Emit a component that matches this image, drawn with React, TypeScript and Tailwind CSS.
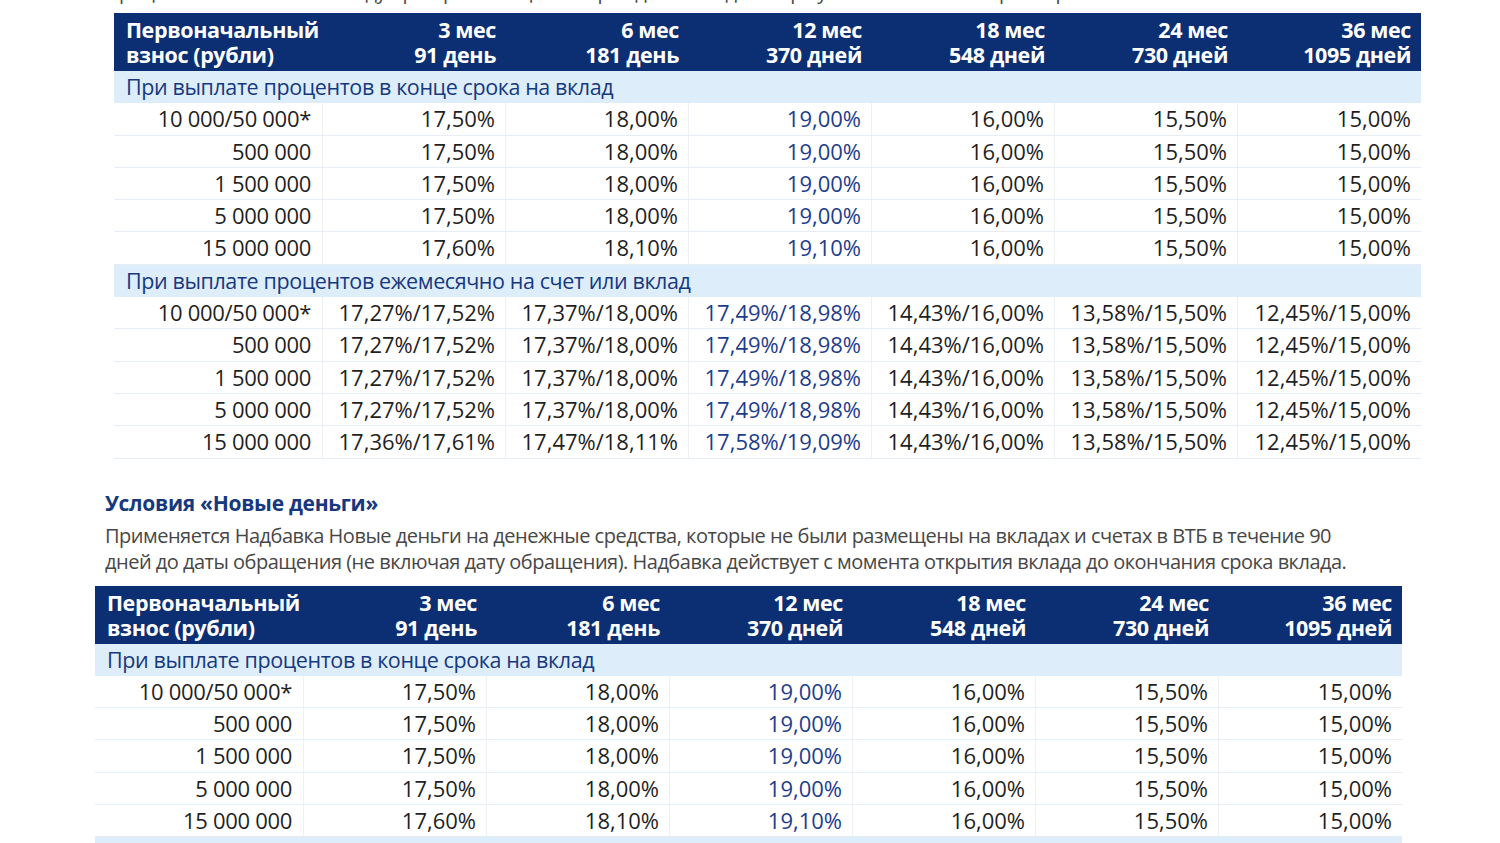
const FONT = { fontFamily: '"Open Sans", "Noto Sans", sans-serif' }

const HEADS = [
  ['3 мес', '91 день'],
  ['6 мес', '181 день'],
  ['12 мес', '370 дней'],
  ['18 мес', '548 дней'],
  ['24 мес', '730 дней'],
  ['36 мес', '1095 дней'],
]

const AMOUNTS = ['10 000/50 000*', '500 000', '1 500 000', '5 000 000', '15 000 000']

const END_RATES = [
  ['17,50%', '18,00%', '19,00%', '16,00%', '15,50%', '15,00%'],
  ['17,50%', '18,00%', '19,00%', '16,00%', '15,50%', '15,00%'],
  ['17,50%', '18,00%', '19,00%', '16,00%', '15,50%', '15,00%'],
  ['17,50%', '18,00%', '19,00%', '16,00%', '15,50%', '15,00%'],
  ['17,60%', '18,10%', '19,10%', '16,00%', '15,50%', '15,00%'],
]

const MONTHLY = ['17,27%/17,52%', '17,37%/18,00%', '17,49%/18,98%', '14,43%/16,00%', '13,58%/15,50%', '12,45%/15,00%']
const MONTHLY_RATES = [
  MONTHLY,
  MONTHLY,
  MONTHLY,
  MONTHLY,
  ['17,36%/17,61%', '17,47%/18,11%', '17,58%/19,09%', '14,43%/16,00%', '13,58%/15,50%', '12,45%/15,00%'],
]

function Header() {
  return (
    <div className="grid grid-cols-[209px_repeat(6,183px)] h-[58px] bg-[#0c2f74] text-white font-bold text-[21.5px] leading-[25px] tracking-[-0.4px]">
      <div className="pl-[12px] pt-[4px]">
        Первоначальный
        <br />
        взнос (рубли)
      </div>
      {HEADS.map(([a, b]) => (
        <div key={a} className="text-right pr-[10px] pt-[4px]">
          {a}
          <br />
          {b}
        </div>
      ))}
    </div>
  )
}

function SubHeader({ title }: { title: string }) {
  return (
    <div className="h-[32.3px] bg-[#ddeefa] text-[#17387f] text-[21.5px] leading-[32px] tracking-[-0.4px] pl-[12px]">
      {title}
    </div>
  )
}

function Rows({ rates }: { rates: string[][] }) {
  return (
    <>
      {AMOUNTS.map((amount, i) => (
        <div
          key={amount}
          className="grid grid-cols-[209px_repeat(6,183px)] h-[32.3px] border-b border-[#e6edf4] text-[22px] leading-[31px] font-medium text-[#1f1f1f]"
        >
          <div className="text-right pr-[11px] border-r border-[#edf1f6] tracking-[-0.3px]">{amount}</div>
          {rates[i].map((r, j) => (
            <div
              key={j}
              className={
                j === 2
                  ? 'text-right pr-[10px] border-r border-[#edf1f6] text-[#1d3d8c]'
                  : j === 5
                    ? 'text-right pr-[10px]'
                    : 'text-right pr-[10px] border-r border-[#edf1f6]'
              }
            >
              {r}
            </div>
          ))}
        </div>
      ))}
    </>
  )
}

function RateTable({ offset, second }: { offset: string; second: boolean }) {
  return (
    <div className={`${offset} w-[1307px]`}>
      <Header />
      <SubHeader title="При выплате процентов в конце срока на вклад" />
      <Rows rates={END_RATES} />
      {second ? (
        <>
          <SubHeader title="При выплате процентов ежемесячно на счет или вклад" />
          <Rows rates={MONTHLY_RATES} />
        </>
      ) : (
        <div className="h-[8px] bg-[#ddeefa]" />
      )}
    </div>
  )
}

export default function App() {
  return (
    <div className="w-[1500px] h-[843px] overflow-hidden bg-white" style={FONT}>
      <div className="h-[13px] overflow-hidden">
        <div className="ml-[105px] -mt-[21px] text-[20px] leading-[26px] tracking-[-0.5px] text-[#4a4a4a] whitespace-nowrap">
          Процентные ставки по вкладу при пролонгации на срок действия договора устанавливаются в размере базовой
        </div>
      </div>
      <RateTable offset="ml-[114px]" second />
      <div className="ml-[105px] mt-[31px] text-[21px] leading-[26px] tracking-[-0.3px] font-bold text-[#17387f]">
        Условия «Новые деньги»
      </div>
      <p className="ml-[105px] mt-[7px] text-[20px] leading-[26px] tracking-[-0.5px] text-[#474747] whitespace-nowrap">
        Применяется Надбавка Новые деньги на денежные средства, которые не были размещены на вкладах и счетах в ВТБ в течение 90
        <br />
        дней до даты обращения (не включая дату обращения). Надбавка действует с момента открытия вклада до окончания срока вклада.
      </p>
      <div className="mt-[11px]">
        <RateTable offset="ml-[95px]" second={false} />
      </div>
    </div>
  )
}
